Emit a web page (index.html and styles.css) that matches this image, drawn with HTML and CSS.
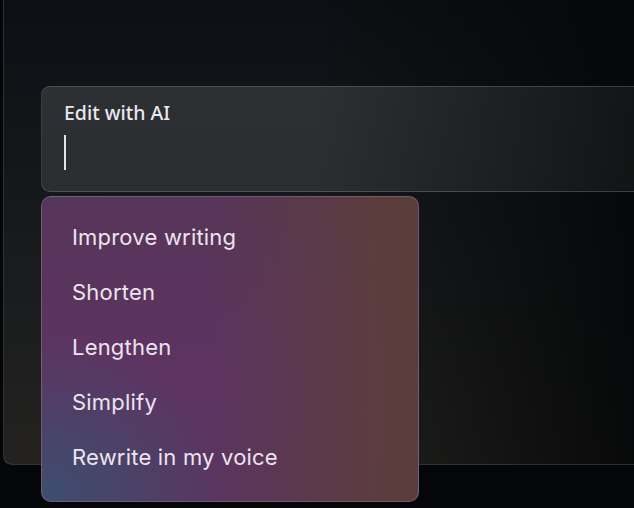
FILE: index.html
```html
<!DOCTYPE html>
<html lang="en">
<head>
  <meta charset="UTF-8">
  <title>Edit with AI</title>
  <link rel="stylesheet" href="styles.css">
</head>
<body>
  <div class="panel">
    <div class="prompt">
      <div class="prompt-box">
        <div class="prompt-label">Edit with AI</div>
        <div class="caret"></div>
      </div>
      <ul class="ai-menu">
        <li>Improve writing</li>
        <li>Shorten</li>
        <li>Lengthen</li>
        <li>Simplify</li>
        <li>Rewrite in my voice</li>
      </ul>
    </div>
  </div>
</body>
</html>
```

FILE: styles.css
```css
html, body { height: 100%; }
body {
  margin: 0;
  background: #050607;
  overflow: hidden;
  font-family: Inter, "Noto Sans", sans-serif;
}
.panel {
  margin-left: 3px;
  width: 631px;
  height: 465px;
  box-sizing: border-box;
  padding: 86px 0 0 37px;
  border-left: 1px solid rgba(120, 120, 120, 0.35);
  border-bottom: 1px solid rgba(120, 120, 120, 0.35);
  border-bottom-left-radius: 9px;
  background:
    linear-gradient(90deg, rgba(5,6,7,0) 50%, rgba(5,6,7,0.9) 100%),
    linear-gradient(180deg, #0c0f13 0%, #15181b 40%, #232220 100%);
}
.prompt { position: relative; }
.prompt-box {
  height: 106px;
  margin-right: -20px;
  box-sizing: border-box;
  padding: 12px 22px 0;
  border: 1px solid rgba(160, 160, 165, 0.3);
  border-radius: 9px;
  background:
    linear-gradient(90deg, rgba(8,9,10,0) 45%, rgba(8,9,10,0.75) 100%),
    linear-gradient(180deg, #2d3033 0%, #2b2d2f 100%);
}
.prompt-label {
  font-family: "Noto Sans", "Open Sans", sans-serif;
  font-weight: 500;
  font-size: 19.5px;
  line-height: 28px;
  color: #ebe6ee;
}
.caret {
  width: 2px;
  height: 35px;
  margin-top: 8px;
  background: #e6e2ea;
}
.ai-menu {
  position: absolute;
  top: 110px;
  left: 0;
  width: 378px;
  height: 306px;
  box-sizing: border-box;
  margin: 0;
  padding: 13px 0 0 30px;
  list-style: none;
  border: 1px solid rgba(170, 150, 180, 0.35);
  border-radius: 10px;
  background:
    radial-gradient(ellipse 50% 55% at 0% 100%, rgba(58, 80, 112, 0.95) 0%, rgba(58, 80, 112, 0) 100%),
    linear-gradient(90deg, rgba(90, 60, 58, 0) 45%, rgba(92, 62, 58, 0.92) 92%),
    linear-gradient(180deg, #573559 0%, #5e3362 60%, #5b3460 100%);
}
.ai-menu li {
  height: 55px;
  line-height: 55px;
  font-size: 22px;
  letter-spacing: 0.2px;
  color: #ece4ee;
}
```
